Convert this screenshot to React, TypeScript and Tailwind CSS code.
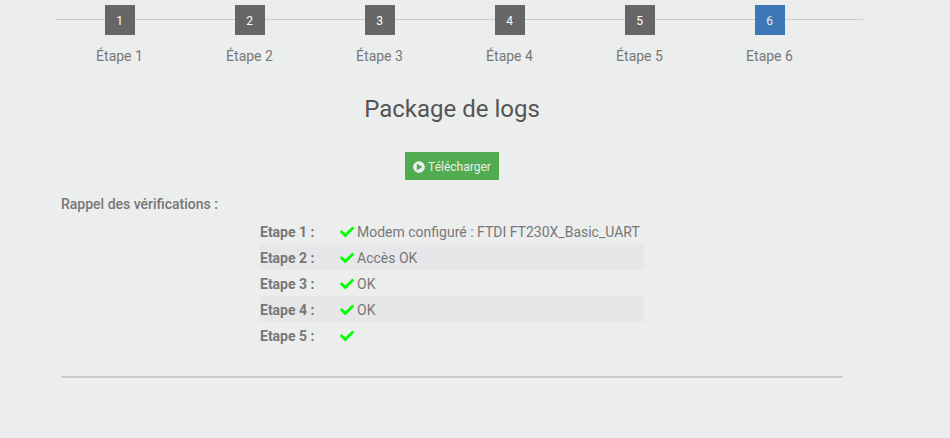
import { FaCheck, FaPlayCircle } from 'react-icons/fa';

interface Step {
  label: string;
  active?: boolean;
}

interface Check {
  name: string;
  result: string;
}

const steps: Step[] = [
  { label: 'Étape 1' },
  { label: 'Étape 2' },
  { label: 'Étape 3' },
  { label: 'Étape 4' },
  { label: 'Étape 5' },
  { label: 'Etape 6', active: true },
];

const checks: Check[] = [
  { name: 'Etape 1 :', result: 'Modem configuré : FTDI FT230X_Basic_UART' },
  { name: 'Etape 2 :', result: 'Accès OK' },
  { name: 'Etape 3 :', result: 'OK' },
  { name: 'Etape 4 :', result: 'OK' },
  { name: 'Etape 5 :', result: '' },
];

const Stepper: React.FC = () => {
  return (
    <div className="relative pt-[5px] pr-7">
      <div className="absolute inset-x-0 top-[19px] h-px bg-[#cccccc]" />
      <ol className="grid grid-cols-6">
        {steps.map((step, index) => (
          <li key={step.label} className="relative flex flex-col items-center">
            <button
              type="button"
              className={`h-[30px] w-[30px] pt-0.5 pr-px text-xs ${
                step.active ? 'bg-[#3c78b5] text-[#eceeed]' : 'bg-[#666666] text-white'
              }`}
            >
              {index + 1}
            </button>
            <p className="mt-[11px] pr-px leading-5">{step.label}</p>
          </li>
        ))}
      </ol>
    </div>
  );
};

const App: React.FC = () => {
  return (
    <div className="min-h-screen bg-[#eceeed] pr-[87px] pl-[55px] font-['Roboto',sans-serif] text-sm text-[#777777]">
      <Stepper />
      <main className="pr-5 pl-[6px]">
        <h3 className="mt-7 text-center text-2xl leading-[30px] text-[#555555]">Package de logs</h3>
        <div className="mt-7 flex justify-center">
          <button
            type="button"
            className="flex h-7 items-center gap-[3px] bg-[#51ab51] px-2 pt-0.5 text-xs text-[#eceeed]"
          >
            <FaPlayCircle />
            <span>Télécharger</span>
          </button>
        </div>
        <p className="mt-[14px] leading-5 font-medium">Rappel des vérifications :</p>
        <table className="mx-auto mt-1 min-w-96">
          <tbody>
            {checks.map((check) => (
              <tr key={check.name} className="leading-5 even:bg-[#e7e7e9]">
                <th scope="row" className="w-20 pt-1 pb-0.5 text-left font-bold">
                  {check.name}
                </th>
                <td className="pt-1 pb-0.5">
                  <div className="flex items-center gap-[3px]">
                    <FaCheck className="text-[#00ff00]" />
                    <span>{check.result}</span>
                  </div>
                </td>
              </tr>
            ))}
          </tbody>
        </table>
        <hr className="mt-7 border-t-2 border-[#cccccc]" />
      </main>
    </div>
  );
};

export default App;
